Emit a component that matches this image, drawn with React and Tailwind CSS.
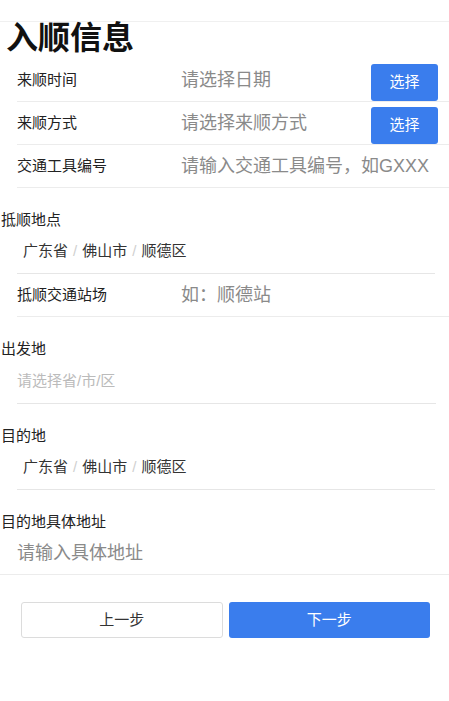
import React from 'react';

const FONT = { fontFamily: '"Liberation Sans", "Noto Sans CJK SC", "Noto Sans", sans-serif' };

const ROWS = [
    { label: '来顺时间', placeholder: '请选择日期', action: true },
    { label: '来顺方式', placeholder: '请选择来顺方式', action: true },
    { label: '交通工具编号', placeholder: '请输入交通工具编号，如GXXX', action: false },
];

function FieldRow({ label, placeholder, action }) {
    return (
        <div className="ml-[17px] h-[43px] flex items-center border-b border-[#ececec]">
            <span className="w-[164px] shrink-0 text-[15px] text-[#222]">{label}</span>
            <span className="flex-1 text-[18px] text-[#8a8a8a] whitespace-nowrap">{placeholder}</span>
            {action && (
                <button className="self-end mr-[11px] w-[67px] h-[37px] rounded-[3px] bg-[#3a7ded] text-white text-[15px]">
                    选择
                </button>
            )}
        </div>
    );
}

function Region({ parts }) {
    return (
        <div className="ml-[17px] mr-[14px] h-[44px] pl-[6px] flex items-center border-b border-[#e6e6e6] text-[15px] text-[#333]">
            {parts.map((p, i) => (
                <React.Fragment key={p}>
                    {i > 0 && <span className="mx-[5px] text-[#d0d0d0]">/</span>}
                    <span>{p}</span>
                </React.Fragment>
            ))}
        </div>
    );
}

function SectionLabel({ children }) {
    return <div className="mt-[22px] pl-px h-[20px] leading-[20px] text-[15px] text-[#222]">{children}</div>;
}

export default function App() {
    const region = ['广东省', '佛山市', '顺德区'];

    return (
        <div className="min-h-screen bg-white" style={FONT}>
            <div className="pt-[21px]">
                <div className="border-t border-[#f0f0f0]">
                    <h1 className="pl-[6px] h-[37px] leading-[32px] text-[32px] font-bold text-[#111]">入顺信息</h1>
                </div>
            </div>

            {ROWS.map((r) => (
                <FieldRow key={r.label} {...r} />
            ))}

            {/* 抵顺地点 */}
            <SectionLabel>抵顺地点</SectionLabel>
            <Region parts={region} />
            <FieldRow label="抵顺交通站场" placeholder="如：顺德站" />

            {/* 出发地 */}
            <SectionLabel>出发地</SectionLabel>
            <div className="ml-[17px] mr-[13px] h-[45px] flex items-center border-b border-[#e6e6e6] text-[15px] text-[#bbbbbb]">
                请选择省/市/区
            </div>

            {/* 目的地 */}
            <SectionLabel>目的地</SectionLabel>
            <Region parts={region} />

            <SectionLabel>目的地具体地址</SectionLabel>
            <div className="h-[43px] pl-[17px] flex items-center border-b border-[#ececec] text-[18px] text-[#8a8a8a]">
                请输入具体地址
            </div>

            {/* Buttons */}
            <div className="mt-[27px] pl-[21px] pr-[19px] grid grid-cols-2 gap-[6px]">
                <button className="h-[36px] rounded-[3px] border border-[#dcdcdc] bg-white text-[15px] text-[#333]">上一步</button>
                <button className="h-[36px] rounded-[3px] bg-[#3a7ded] text-[15px] text-white">下一步</button>
            </div>
        </div>
    );
}
